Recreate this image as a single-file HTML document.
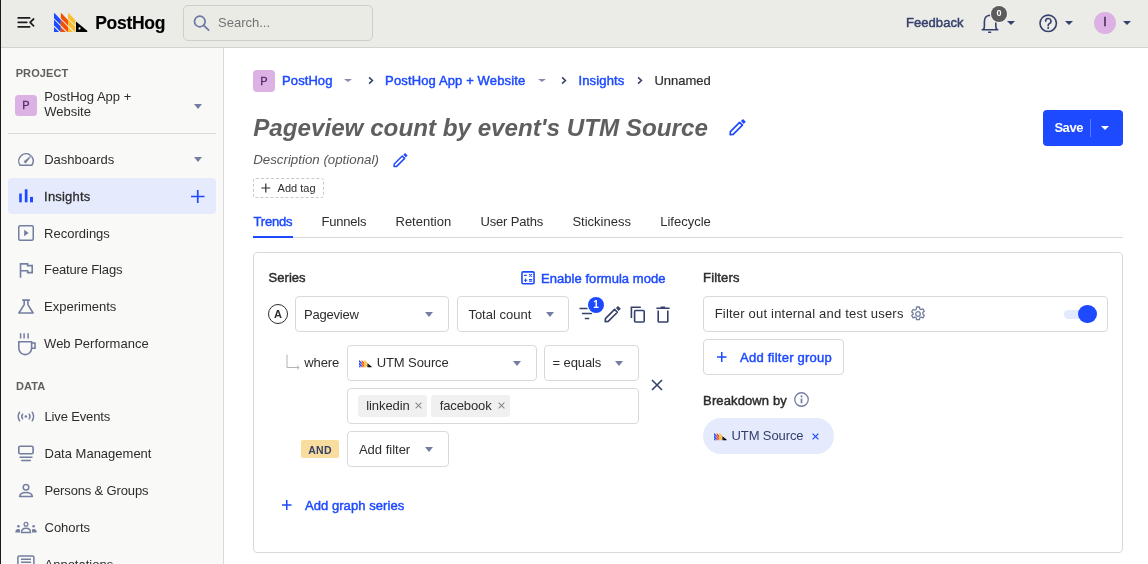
<!DOCTYPE html>
<html><head><meta charset="utf-8">
<style>
*{box-sizing:border-box;margin:0;padding:0}
html,body{width:1148px;height:564px;overflow:hidden;background:#fff;font-family:"Liberation Sans",sans-serif;color:#2d2d2d}
.a{position:absolute}
.t{position:absolute;white-space:nowrap;line-height:1}
.b{font-weight:700}
.sb{font-weight:400;-webkit-text-stroke:0.45px currentColor}
svg{position:absolute;overflow:visible}
#hdr{left:0;top:0;width:1148px;height:48px;background:#ebebe7;border-bottom:1px solid #d3d3cf}
#side{left:0;top:48px;width:224px;height:516px;background:#f9f9f7;border-right:1px solid #d9d9d5}
#edge{left:0;top:0;width:1px;height:564px;background:#1a1a1a}
.sel{position:absolute;border:1px solid #d9d9d9;border-radius:4px;background:#fff}
.arr{position:absolute;width:0;height:0;border-left:4.7px solid transparent;border-right:4.7px solid transparent;border-top:5px solid #747ea1}
.blue{color:#1d4aff}
.navy{color:#35416b}
</style></head><body><div style="position:absolute;left:0;top:0;width:1148px;height:564px;will-change:transform;opacity:0.999">
<!-- header -->
<div id="hdr" class="a"></div>
<div id="side" class="a"></div>
<div id="edge" class="a"></div>

<!-- hamburger -->
<svg style="left:17px;top:16px" width="18" height="12" viewBox="0 0 18 12">
<path d="M1.2 1.9h11.4M1.2 6.3h8.6M1.2 10.8h11.4M16.6 3L13.1 6.3L16.6 9.8" stroke="#1f1f1f" stroke-width="1.75" fill="none" stroke-linecap="round" stroke-linejoin="round"/>
</svg>
<!-- logo -->
<svg style="left:54.3px;top:12.9px" width="34" height="19" viewBox="0 0 34 19"><g id="lg">
<g fill="#1d4aff"><path d="M0 0.2L0.4 0L6.8 6.8V12.0L0 5.2Z"/><path d="M0 6.6L6.8 13.399999999999999V19H6.7L0 12.3Z"/><path d="M0 13.9L5.1 19H0Z"/></g><g fill="#f54e00"><path d="M6.8 0.2L7.2 0L14.1 7.3V12.5L6.8 5.2Z"/><path d="M6.8 6.6L14.1 13.899999999999999V19H13.5L6.8 12.3Z"/><path d="M6.8 13.9L11.899999999999999 19H6.8Z"/></g><g fill="#f9bd2b"><path d="M14.1 0.2L14.5 0L21.3 7.2V12.4L14.1 5.2Z"/><path d="M14.1 6.6L21.3 13.8V19H20.8L14.1 12.3Z"/><path d="M14.1 13.9L19.2 19H14.1Z"/></g>
<path d="M22 8.4L32.6 17.2Q34.2 18.6 33 19H22Z" fill="#000"/>
<circle cx="25.5" cy="15.4" r="1.05" fill="#fff"/>
</g></svg>
<div class="t b" style="left:95.2px;top:14.6px;font-size:17.5px;color:#000;letter-spacing:-0.3px;-webkit-text-stroke:0.15px #000">PostHog</div>

<!-- search -->
<div class="a" style="left:183px;top:5px;width:190px;height:36px;border:1px solid #cfcfca;border-radius:5px;background:#ebebe6"></div>
<svg style="left:193px;top:15px" width="17" height="16" viewBox="0 0 17 16">
<circle cx="6.8" cy="6.5" r="5.3" stroke="#6b77a5" stroke-width="1.7" fill="none"/><path d="M10.7 10.4L15.6 15.2" stroke="#6b77a5" stroke-width="1.7" stroke-linecap="round"/>
</svg>
<div class="t" style="left:218px;top:15.5px;font-size:13px;color:#737373">Search...</div>

<!-- header right -->
<div class="t sb navy" style="left:906px;top:16.4px;font-size:13px;letter-spacing:0.06px">Feedback</div>
<svg style="left:981px;top:13px" width="18" height="21" viewBox="0 0 18 21">
<path d="M1.2 16.7H16.8M2.2 16.4Q3.4 15.6 3.4 13V8.2Q3.6 2.8 8.6 2.3Q13.6 2.8 14.8 8.2V13Q14.8 15.6 16 16.4" stroke="#35416b" stroke-width="1.6" fill="none" stroke-linecap="round" stroke-linejoin="round"/>
<path d="M7.6 19.3H9.6" stroke="#35416b" stroke-width="1.5" stroke-linecap="round"/>
</svg>
<div class="a" style="left:991px;top:5.8px;width:16px;height:16px;border-radius:50%;background:#5c5c5c;box-shadow:0 0 0 1.1px #f3f3f0"></div>
<div class="t b" style="left:991px;top:9.4px;width:16px;text-align:center;font-size:9px;color:#fff">0</div>
<div class="arr" style="left:1007.3px;top:21.2px;border-top-color:#35416b;border-left-width:4.3px;border-right-width:4.3px;border-top-width:4.8px"></div>
<svg style="left:1038.5px;top:13.5px" width="19" height="19" viewBox="0 0 19 19">
<circle cx="9.2" cy="9.3" r="8.2" stroke="#35416b" stroke-width="1.6" fill="none"/>
<path d="M6.6 7.2a2.7 2.7 0 1 1 3.6 2.5c-.7.3-1 .8-1 1.5v.6" stroke="#35416b" stroke-width="1.6" fill="none" stroke-linecap="round"/>
<circle cx="9.2" cy="13.9" r="1" fill="#35416b"/>
</svg>
<div class="arr" style="left:1064.5px;top:20.8px;border-top-color:#35416b;border-left-width:4.55px;border-right-width:4.55px;border-top-width:4.8px"></div>
<div class="a" style="left:1094px;top:12px;width:22px;height:22px;border-radius:50%;background:#dcb1e3"></div>
<div class="t" style="left:1094px;top:16.2px;width:22px;text-align:center;font-size:12.5px;color:#45245a;-webkit-text-stroke:0.4px #45245a">I</div>
<div class="arr" style="left:1122.5px;top:20.8px;border-top-color:#35416b;border-left-width:4.55px;border-right-width:4.55px;border-top-width:4.8px"></div>

<!-- SIDEBAR -->
<div class="t b" style="left:15.7px;top:68.1px;font-size:11px;color:#5f5f5f;letter-spacing:0.1px">PROJECT</div>
<div class="a" style="left:15.2px;top:94.8px;width:21.7px;height:21.4px;border-radius:3.5px;background:#dcb1e3"></div>
<div class="t sb" style="left:15.2px;top:100px;width:21.7px;text-align:center;font-size:11px;color:#55296a;-webkit-text-stroke-width:0.3px">P</div>
<div class="t" style="left:44.2px;top:90.2px;font-size:13px">PostHog App +</div>
<div class="t" style="left:44.2px;top:104.7px;font-size:13px">Website</div>
<div class="arr" style="left:193.6px;top:103.5px"></div>
<div class="a" style="left:8px;top:133px;width:208px;height:1px;background:#d9d9d5"></div>

<div class="t" style="left:44.2px;top:153px;font-size:13px">Dashboards</div>
<div class="arr" style="left:193.6px;top:157px"></div>
<div class="a" style="left:8px;top:178px;width:208px;height:36px;border-radius:4px;background:#e6eafd"></div>
<div class="t" style="left:44.1px;top:189.8px;font-size:13px;letter-spacing:0.2px;-webkit-text-stroke:0.3px #2d2d2d">Insights</div>
<div class="t" style="left:44.1px;top:226.6px;font-size:13px">Recordings</div>
<div class="t" style="left:44.1px;top:263.4px;font-size:13px;letter-spacing:-0.15px">Feature Flags</div>
<div class="t" style="left:44.1px;top:300.2px;font-size:13px">Experiments</div>
<div class="t" style="left:44.1px;top:337px;font-size:13px">Web Performance</div>
<div class="t b" style="left:15.9px;top:381px;font-size:11px;color:#5f5f5f;letter-spacing:0.1px">DATA</div>
<div class="t" style="left:44.5px;top:409.6px;font-size:13px;letter-spacing:-0.15px">Live Events</div>
<div class="t" style="left:44.5px;top:446.9px;font-size:13px">Data Management</div>
<div class="t" style="left:44.5px;top:483.8px;font-size:13px;letter-spacing:-0.15px">Persons &amp; Groups</div>
<div class="t" style="left:44.5px;top:521.3px;font-size:13px">Cohorts</div>
<div class="t" style="left:44.5px;top:557.7px;font-size:13px">Annotations</div>

<!-- sidebar icons -->
<svg style="left:18px;top:153px" width="16" height="13" viewBox="0 0 16 13">
<path d="M13.9 3.87A7.2 7.2 0 0 1 13.85 12.2L2.15 12.2A7.2 7.2 0 0 1 12.13 2.1" stroke="#747ea1" stroke-width="1.5" fill="none" stroke-linejoin="round" stroke-linecap="round"/>
<path d="M5.9 8.6L13.6 2.4L7.6 10.2Z" fill="#747ea1" stroke="#747ea1" stroke-width="0.6" stroke-linejoin="round"/>
</svg>
<svg style="left:19px;top:189px" width="15" height="14" viewBox="0 0 15 14">
<rect x="0.2" y="4.5" width="2.6" height="8.8" fill="#1d4aff"/><rect x="5.8" y="0.3" width="2.7" height="13" fill="#1d4aff"/><rect x="11" y="7.9" width="3" height="5.4" fill="#1d4aff"/>
</svg>
<svg style="left:190.9px;top:190px" width="14" height="13" viewBox="0 0 14 13">
<path d="M6.75 0v13M0 6.5h13.5" stroke="#1d4aff" stroke-width="1.7"/>
</svg>
<svg style="left:18px;top:225px" width="16" height="16" viewBox="0 0 16 16">
<rect x="0.75" y="0.75" width="14.5" height="14.5" rx="1.5" stroke="#747ea1" stroke-width="1.5" fill="none"/><path d="M6.2 4.8L10.6 8L6.2 11.2Z" fill="#747ea1"/>
</svg>
<svg style="left:19px;top:263px" width="15" height="16" viewBox="0 0 15 16">
<path d="M1.5 14.8V0.9H8.6V2.6H13.2V9.6H8.6V7.7H1.5" stroke="#747ea1" stroke-width="1.6" fill="none" stroke-linejoin="miter"/>
</svg>
<svg style="left:18px;top:299px" width="17" height="15" viewBox="0 0 17 15">
<path d="M4.2 1.1H11.9M6.2 1.1V5.6L0.9 14H15.1L9.9 5.6V1.1" stroke="#747ea1" stroke-width="1.6" fill="none" stroke-linejoin="round"/>
</svg>
<svg style="left:18px;top:333px" width="18" height="23" viewBox="0 0 18 23">
<path d="M2.6 0.3V5.6M6.1 0.3V5.6M10.1 0.3V5.6" stroke="#747ea1" stroke-width="1.5"/>
<path d="M0.8 8.8H13.6V15.2A6.4 6.4 0 0 1 0.8 15.2Z" stroke="#747ea1" stroke-width="1.6" fill="none"/>
<path d="M13.6 10H17V15.2H13.6" stroke="#747ea1" stroke-width="1.6" fill="none"/>
</svg>
<svg style="left:17px;top:411px" width="18" height="11" viewBox="0 0 18 11">
<path d="M2.6 1.2Q-0.2 5.5 2.6 9.8M15.2 1.2Q18 5.5 15.2 9.8M5.6 3.2Q3.9 5.5 5.6 7.8M12.2 3.2Q13.9 5.5 12.2 7.8" stroke="#747ea1" stroke-width="1.5" fill="none" stroke-linecap="round"/>
<circle cx="8.9" cy="5.5" r="1.3" fill="#747ea1"/>
</svg>
<svg style="left:17px;top:445px" width="18" height="17" viewBox="0 0 18 17">
<rect x="1.8" y="1.2" width="14.3" height="7.5" rx="1.3" stroke="#747ea1" stroke-width="1.6" fill="none"/><path d="M2.5 12.2H15.5M4.2 15.6H13.8" stroke="#747ea1" stroke-width="1.5"/>
</svg>
<svg style="left:18px;top:483px" width="16" height="15" viewBox="0 0 16 15">
<circle cx="8" cy="4.3" r="2.8" stroke="#747ea1" stroke-width="1.5" fill="none"/><path d="M1.6 13.6Q2.2 9.6 8 9.6Q13.8 9.6 14.4 13.6Z" stroke="#747ea1" stroke-width="1.5" fill="none" stroke-linejoin="round"/>
</svg>
<svg style="left:15px;top:522px" width="22" height="11" viewBox="0 0 22 11">
<circle cx="11" cy="2.3" r="1.9" stroke="#747ea1" stroke-width="1.3" fill="none"/><path d="M6.5 10.5Q6.5 6.2 11 6.2Q15.5 6.2 15.5 10.5Z" stroke="#747ea1" stroke-width="1.4" fill="none"/>
<circle cx="3.4" cy="4.2" r="1.3" fill="#747ea1"/><path d="M0.3 10.5Q0.3 7 3.2 7Q4.4 7 5 7.6V10.5Z" fill="#747ea1"/>
<circle cx="18.6" cy="4.2" r="1.3" fill="#747ea1"/><path d="M21.7 10.5Q21.7 7 18.8 7Q17.6 7 17 7.6V10.5Z" fill="#747ea1"/>
</svg>
<svg style="left:17px;top:555px" width="18" height="12" viewBox="0 0 18 12">
<rect x="0.9" y="0.9" width="16" height="12" rx="1.5" stroke="#747ea1" stroke-width="1.5" fill="none"/><path d="M4 4.2H14M4 7.2H14" stroke="#747ea1" stroke-width="1.5"/>
</svg>

<!-- MAIN -->
<!-- breadcrumbs -->
<div class="a" style="left:253px;top:70px;width:22px;height:22px;border-radius:4px;background:#dcb1e3"></div>
<div class="t sb" style="left:253px;top:76px;width:22px;text-align:center;font-size:11px;color:#55296a;-webkit-text-stroke-width:0.3px">P</div>
<div class="t sb blue" style="left:282.1px;top:73.5px;font-size:13px;letter-spacing:0.07px">PostHog</div>
<div class="arr" style="left:344.1px;top:79px;border-top-color:#858cab;border-left-width:4px;border-right-width:4px;border-top-width:3.9px"></div>
<svg style="left:368.2px;top:75px" width="7" height="10" viewBox="0 0 7 10"><path d="M1.1 2.4L4.4 5.5L1.1 8.6" stroke="#35416b" stroke-width="1.6" fill="none"/></svg>
<div class="t sb blue" style="left:385.1px;top:73.5px;font-size:13px;letter-spacing:0.13px">PostHog App + Website</div>
<div class="arr" style="left:537.5px;top:79px;border-top-color:#858cab;border-left-width:4px;border-right-width:4px;border-top-width:3.9px"></div>
<svg style="left:561.2px;top:75px" width="7" height="10" viewBox="0 0 7 10"><path d="M1.1 2.4L4.4 5.5L1.1 8.6" stroke="#35416b" stroke-width="1.6" fill="none"/></svg>
<div class="t sb blue" style="left:578.5px;top:73.5px;font-size:13px;letter-spacing:0.14px">Insights</div>
<svg style="left:637.2px;top:75px" width="7" height="10" viewBox="0 0 7 10"><path d="M1.1 2.4L4.4 5.5L1.1 8.6" stroke="#35416b" stroke-width="1.6" fill="none"/></svg>
<div class="t" style="left:654.4px;top:73.5px;font-size:13px;color:#2d2d2d;-webkit-text-stroke:0.2px #2d2d2d">Unnamed</div>

<!-- title -->
<div class="t b" style="left:253.2px;top:115.8px;font-size:24.2px;font-style:italic;color:#5f5f5f">Pageview count by event's UTM Source</div>
<svg style="left:729px;top:119.2px" width="18.00" height="17.00" viewBox="0 0 18 17">
<path d="M1.2 15.6L1.4 12.6L10.6 3.4L13.4 6.2L4.2 15.4Z" stroke="#1d4aff" stroke-width="1.7" fill="none" stroke-linejoin="round"/>
<path d="M11.9 2.1L14.7 4.9L16.8 2.8L14 0Z" fill="#1d4aff"/>
</svg>
<div class="t" style="left:253.2px;top:152.6px;font-size:13.3px;font-style:italic;color:#555">Description (optional)</div>
<svg style="left:393.2px;top:153.2px" width="15.66" height="14.79" viewBox="0 0 18 17">
<path d="M1.2 15.6L1.4 12.6L10.6 3.4L13.4 6.2L4.2 15.4Z" stroke="#1d4aff" stroke-width="1.7" fill="none" stroke-linejoin="round"/>
<path d="M11.9 2.1L14.7 4.9L16.8 2.8L14 0Z" fill="#1d4aff"/>
</svg>
<div class="a" style="left:253px;top:178px;width:71px;height:20px;border:1px dashed #c9c9c9;border-radius:3px"></div>
<svg style="left:261px;top:183px" width="10" height="10" viewBox="0 0 10 10"><path d="M4.8 0.5v9M0.3 5h9" stroke="#2d2d2d" stroke-width="1.2"/></svg>
<div class="t" style="left:277.6px;top:183px;font-size:11px;color:#2d2d2d">Add tag</div>

<!-- save -->
<div class="a" style="left:1043px;top:110px;width:80px;height:36px;border-radius:4px;background:#1d4aff"></div>
<div class="t b" style="left:1054.4px;top:120.8px;font-size:13px;color:#fff;letter-spacing:-0.45px">Save</div>
<div class="a" style="left:1090px;top:119px;width:1px;height:18px;background:#5b7bff"></div>
<div class="arr" style="left:1101px;top:125.8px;border-top-color:#fff;border-left-width:4.2px;border-right-width:4.2px;border-top-width:4px"></div>

<!-- tabs -->
<div class="t sb blue" style="left:253.4px;top:214.85px;font-size:13px;letter-spacing:-0.15px">Trends</div>
<div class="t" style="left:321.5px;top:214.85px;font-size:13px;letter-spacing:-0.2px">Funnels</div>
<div class="t" style="left:395.5px;top:214.85px;font-size:13px">Retention</div>
<div class="t" style="left:480.4px;top:214.85px;font-size:13px;letter-spacing:-0.15px">User Paths</div>
<div class="t" style="left:572.4px;top:214.85px;font-size:13px">Stickiness</div>
<div class="t" style="left:660.2px;top:214.85px;font-size:13px">Lifecycle</div>
<div class="a" style="left:253px;top:237px;width:870px;height:1px;background:#d9d9d9"></div>
<div class="a" style="left:253px;top:235.5px;width:40px;height:2px;background:#1d4aff"></div>

<!-- card -->
<div class="a" style="left:253px;top:252px;width:870px;height:301px;border:1px solid #d9d9d9;border-radius:4px"></div>

<!-- card content -->
<div class="t sb" style="left:268.6px;top:271.2px;font-size:13px;letter-spacing:0.03px">Series</div>
<svg style="left:521px;top:271px" width="14" height="14" viewBox="0 0 14 14">
<rect x="0.95" y="0.85" width="12.1" height="11.9" rx="1.2" stroke="#1d4aff" stroke-width="1.6" fill="none"/>
<path d="M2.9 4.4H5.9M8 3.1L11 5.6M11 3.1L8 5.6M2.9 9.2H6.3M4.6 7.4V11.1M8 8.6H11.2M8 10.3H11.2" stroke="#1d4aff" stroke-width="1.1"/>
</svg>
<div class="t sb blue" style="left:541px;top:272px;font-size:13px;letter-spacing:0.05px">Enable formula mode</div>

<div class="a" style="left:268px;top:304px;width:20px;height:20px;border:1.3px solid #2d2d2d;border-radius:50%"></div>
<div class="t b" style="left:268px;top:308.6px;width:20px;text-align:center;font-size:11px">A</div>

<div class="sel" style="left:295px;top:296px;width:154px;height:36px"></div>
<div class="t" style="left:304px;top:308.2px;font-size:13px;letter-spacing:-0.2px">Pageview</div>
<div class="arr" style="left:424.8px;top:311.8px"></div>

<div class="sel" style="left:456.5px;top:296px;width:112px;height:36px"></div>
<div class="t" style="left:468.4px;top:308.2px;font-size:13px">Total count</div>
<div class="arr" style="left:545.8px;top:311.8px"></div>

<svg style="left:579px;top:307px" width="16" height="13" viewBox="0 0 16 13">
<path d="M0.5 1.5H15.5M3 6.5H13M5.8 11.5H10.2" stroke="#35416b" stroke-width="1.6"/>
</svg>
<div class="a" style="left:588px;top:296.7px;width:16.2px;height:16.2px;border-radius:50%;background:#1d4aff;box-shadow:0 0 0 1.2px #fff"></div>
<div class="t b" style="left:588px;top:300.3px;width:16.2px;text-align:center;font-size:10px;color:#fff">1</div>
<svg style="left:603.5px;top:305.5px" width="18" height="17" viewBox="0 0 18 17">
<path d="M1.2 15.6L1.4 12.6L10.6 3.4L13.4 6.2L4.2 15.4Z" stroke="#35416b" stroke-width="1.6" fill="none" stroke-linejoin="round"/>
<path d="M11.9 2.1L14.7 4.9L16.8 2.8L14 0Z" fill="#35416b"/>
</svg>
<svg style="left:630px;top:305.5px" width="16" height="17" viewBox="0 0 16 17">
<rect x="4.6" y="4.5" width="9.6" height="11.5" rx="1" stroke="#35416b" stroke-width="1.6" fill="none"/>
<path d="M1.4 12V1.2H10.8" stroke="#35416b" stroke-width="1.6" fill="none"/>
</svg>
<svg style="left:656px;top:305.5px" width="14" height="17" viewBox="0 0 14 17">
<path d="M0.4 2.2H13.6M4.6 1.2H9.2" stroke="#35416b" stroke-width="1.6" fill="none"/>
<path d="M2.2 4.6V15.2Q2.2 16 3 16H11Q11.8 16 11.8 15.2V4.6" stroke="#35416b" stroke-width="1.6" fill="none"/>
</svg>

<svg style="left:286px;top:354px" width="15" height="15" viewBox="0 0 15 15">
<path d="M1 0.5V13.5H13M11 11.5L13.2 13.5L11 15.5" stroke="#b3b3b3" stroke-width="1" fill="none"/>
</svg>
<div class="t" style="left:304.3px;top:356.3px;font-size:13px;letter-spacing:-0.1px">where</div>

<div class="sel" style="left:347px;top:345px;width:190px;height:36px"></div>
<svg style="left:359px;top:359.6px" width="13" height="7.3" viewBox="0 0 34 19"><use href="#lg"/></svg>
<div class="t" style="left:376.7px;top:356.3px;font-size:13px;letter-spacing:-0.1px">UTM Source</div>
<div class="arr" style="left:513.3px;top:360.8px"></div>

<div class="sel" style="left:544px;top:345px;width:95px;height:36px"></div>
<div class="t" style="left:552.5px;top:356.3px;font-size:13px;letter-spacing:-0.1px">= equals</div>
<div class="arr" style="left:614.6px;top:360.8px"></div>

<svg style="left:651px;top:378.5px" width="12" height="12" viewBox="0 0 12 12">
<path d="M1 1L11 11M11 1L1 11" stroke="#35416b" stroke-width="1.6"/>
</svg>

<div class="sel" style="left:347px;top:388px;width:292px;height:36px"></div>
<div class="a" style="left:358px;top:395px;width:69px;height:21.5px;border-radius:3px;background:#f0f0f0"></div>
<div class="t" style="left:366.3px;top:399.3px;font-size:13px;letter-spacing:-0.1px">linkedin</div>
<svg style="left:415px;top:401.5px" width="7" height="7" viewBox="0 0 7 7"><path d="M0.6 0.6L6.4 6.4M6.4 0.6L0.6 6.4" stroke="#888" stroke-width="1.1"/></svg>
<div class="a" style="left:431.3px;top:395px;width:78.6px;height:21.5px;border-radius:3px;background:#f0f0f0"></div>
<div class="t" style="left:439.7px;top:399.3px;font-size:13px;letter-spacing:-0.1px">facebook</div>
<svg style="left:498.3px;top:401.5px" width="7" height="7" viewBox="0 0 7 7"><path d="M0.6 0.6L6.4 6.4M6.4 0.6L0.6 6.4" stroke="#888" stroke-width="1.1"/></svg>

<div class="a" style="left:301px;top:440px;width:38px;height:18px;border-radius:2px;background:#f8dd9e"></div>
<div class="t b" style="left:301px;top:444.5px;width:38px;text-align:center;font-size:10.5px;color:#35416b;letter-spacing:0.2px">AND</div>
<div class="sel" style="left:347px;top:431px;width:102px;height:36px"></div>
<div class="t" style="left:358.9px;top:443.2px;font-size:13px">Add filter</div>
<div class="arr" style="left:424.8px;top:446.5px"></div>

<svg style="left:281.5px;top:500px" width="10" height="10" viewBox="0 0 10 10"><path d="M4.75 0v10M0 5h9.5" stroke="#1d4aff" stroke-width="1.5"/></svg>
<div class="t sb blue" style="left:304.9px;top:499px;font-size:13px;letter-spacing:0.07px">Add graph series</div>

<!-- right filters -->
<div class="t sb" style="left:703.1px;top:271.2px;font-size:13px;letter-spacing:0.15px">Filters</div>
<div class="sel" style="left:703px;top:296px;width:405px;height:36px"></div>
<div class="t" style="left:714.7px;top:307.4px;font-size:13px;letter-spacing:0.2px">Filter out internal and test users</div>
<svg style="left:910px;top:305.8px" width="16" height="16" viewBox="0 0 16 16">
<path d="M6.6 1h2.8l.4 1.9 1.3.7 1.8-.7 1.4 2.4-1.5 1.3v1.5l1.5 1.3-1.4 2.4-1.8-.7-1.3.7-.4 1.9H6.6l-.4-1.9-1.3-.7-1.8.7-1.4-2.4 1.5-1.3V7.2L1.7 5.9l1.4-2.4 1.8.7 1.3-.7z" stroke="#747ea1" stroke-width="1.3" fill="none" stroke-linejoin="round"/>
<circle cx="8" cy="8" r="2.3" stroke="#747ea1" stroke-width="1.3" fill="none"/>
</svg>
<div class="a" style="left:1064px;top:310px;width:22px;height:9px;border-radius:5px;background:#e3e9fe"></div>
<div class="a" style="left:1078px;top:304.8px;width:18.7px;height:18.7px;border-radius:50%;background:#1d4aff"></div>

<div class="sel" style="left:703px;top:339px;width:141px;height:36px"></div>
<svg style="left:716.8px;top:352px" width="10" height="10" viewBox="0 0 10 10"><path d="M4.75 0v10M0 5h9.5" stroke="#1d4aff" stroke-width="1.5"/></svg>
<div class="t sb blue" style="left:740px;top:351px;font-size:13px;letter-spacing:0.24px">Add filter group</div>

<div class="t sb" style="left:703.1px;top:394.2px;font-size:13px;letter-spacing:0.12px">Breakdown by</div>
<svg style="left:793.5px;top:392.4px" width="15" height="15" viewBox="0 0 15 15">
<circle cx="7.5" cy="7.5" r="6.75" stroke="#747ea1" stroke-width="1.3" fill="none"/><rect x="6.65" y="3.4" width="1.7" height="1.9" fill="#747ea1"/><rect x="6.65" y="6.6" width="1.7" height="4.7" fill="#747ea1"/>
</svg>
<div class="a" style="left:703px;top:418px;width:131px;height:36px;border-radius:18px;background:#e5eafd"></div>
<svg style="left:714.3px;top:433px" width="13" height="7.3" viewBox="0 0 34 19"><use href="#lg"/></svg>
<div class="t" style="left:731.5px;top:428.7px;font-size:13px;color:#35416b;letter-spacing:-0.1px">UTM Source</div>
<svg style="left:811.5px;top:433.3px" width="7" height="7" viewBox="0 0 7 7"><path d="M0.6 0.6L6.4 6.4M6.4 0.6L0.6 6.4" stroke="#1d4aff" stroke-width="1.2"/></svg>
</div></body></html>
